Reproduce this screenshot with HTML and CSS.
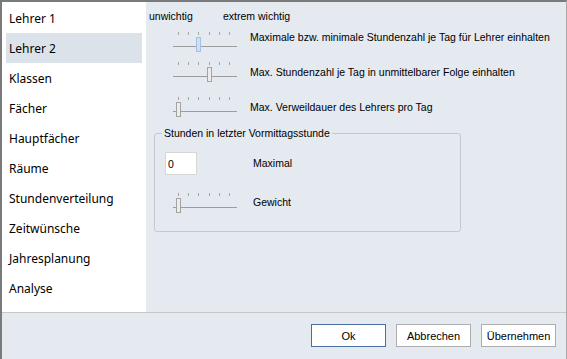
FILE: index.html
```html
<!DOCTYPE html>
<html lang="de">
<head>
<meta charset="utf-8">
<title>Einstellungen</title>
<link rel="stylesheet" href="styles.css">
</head>
<body>
<div class="window">
  <div class="main">
    <ul class="nav">
      <li>Lehrer 1</li>
      <li class="active">Lehrer 2</li>
      <li>Klassen</li>
      <li>Fächer</li>
      <li>Hauptfächer</li>
      <li>Räume</li>
      <li>Stundenverteilung</li>
      <li>Zeitwünsche</li>
      <li>Jahresplanung</li>
      <li>Analyse</li>
    </ul>
    <div class="content">
      <div class="scale"><span class="lo">unwichtig</span><span>extrem wichtig</span></div>
      <div class="row row1">
        <div class="slider"><div class="ticks"><i></i><i></i><i></i><i></i><i></i><i></i></div><div class="track"></div><div class="thumb focus" style="left:23px"></div></div>
        <span class="label">Maximale bzw. minimale Stundenzahl je Tag für Lehrer einhalten</span>
      </div>
      <div class="row row2">
        <div class="slider"><div class="ticks"><i></i><i></i><i></i><i></i><i></i><i></i></div><div class="track"></div><div class="thumb" style="left:34px"></div></div>
        <span class="label">Max. Stundenzahl je Tag in unmittelbarer Folge einhalten</span>
      </div>
      <div class="row row3">
        <div class="slider"><div class="ticks"><i></i><i></i><i></i><i></i><i></i><i></i></div><div class="track"></div><div class="thumb" style="left:3px"></div></div>
        <span class="label">Max. Verweildauer des Lehrers pro Tag</span>
      </div>
      <fieldset class="group">
        <legend>Stunden in letzter Vormittagsstunde</legend>
        <div class="field">
          <input class="num" type="text" value="0">
          <span class="flabel">Maximal</span>
        </div>
        <div class="grow">
          <div class="slider"><div class="ticks"><i></i><i></i><i></i><i></i><i></i><i></i></div><div class="track"></div><div class="thumb" style="left:3px"></div></div>
          <span class="glabel">Gewicht</span>
        </div>
      </fieldset>
    </div>
  </div>
  <div class="footer">
    <button class="btn default">Ok</button>
    <button class="btn">Abbrechen</button>
    <button class="btn">Übernehmen</button>
  </div>
</div>
</body>
</html>
```
FILE: styles.css
```css
* { box-sizing: border-box; }
html, body { margin: 0; padding: 0; background: #e5e9f0; }
body {
  font-family: "Liberation Sans", Arial, sans-serif;
  font-size: 10.5px;
  line-height: 13px;
  color: #000;
}
.window {
  width: 567px;
  height: 359px;
  border-top: 2px solid #7a7a7a;
  border-left: 2px solid #7a7a7a;
  border-right: 1px solid #a9a9a9;
  background: #e5e9f0;
  display: flex;
  flex-direction: column;
}
.main {
  height: 310px;
  display: flex;
}
.nav {
  list-style: none;
  margin: 0;
  padding: 1px 4px 0;
  width: 144px;
  background: #fff;
  font-family: "Noto Sans", "Open Sans", sans-serif;
  font-size: 12px;
}
.nav li {
  height: 30px;
  line-height: 31px;
  padding-left: 3px;
  color: #000;
}
.nav li.active { background: #dbe2ea; }
.content {
  flex: 1;
  padding-left: 3px;
}
.scale {
  display: flex;
  margin-top: 8px;
  height: 13px;
}
.scale .lo { width: 74px; }
.row {
  display: flex;
  align-items: flex-start;
}
.row .slider { margin-left: 24px; }
.row .label { margin-left: 13px; }
.row1 { margin-top: 8px; }
.row1 .slider { margin-top: 1px; }
.row2 { margin-top: 4px; }
.row2 .label { margin-top: 4px; }
.row3 { margin-top: 9px; }
.row3 .label { margin-top: 4px; }
.slider {
  position: relative;
  width: 64px;
  height: 26px;
  flex: none;
}
.ticks {
  display: flex;
  justify-content: space-between;
  padding: 0 7px 0 5px;
  height: 3px;
}
.ticks i {
  display: block;
  width: 1px;
  height: 3px;
  background: #a6a6a6;
}
.track {
  margin-top: 11px;
  height: 1px;
  background: #9c9c9c;
}
.thumb {
  position: absolute;
  top: 5px;
  width: 5px;
  height: 15px;
  border: 1px solid #a3a3a3;
  background: #ececec;
}
.thumb.focus {
  border-color: #a6bfe2;
  background: #cfe0f4;
}
.group {
  margin: 4px 0 0 5px;
  width: 307px;
  padding: 0 0 12px 0;
  border: 1px solid #c5c9cf;
  border-radius: 3px;
}
.group legend {
  margin-left: 7px;
  padding: 0 2px;
  height: 13px;
}
.field {
  display: flex;
  align-items: center;
  margin-top: 12px;
  margin-left: 10px;
}
.num {
  width: 32px;
  height: 23px;
  border: 1px solid #d6d6d6;
  background: #fff;
  font-family: "Liberation Sans", Arial, sans-serif;
  font-size: 10.5px;
  padding: 0 0 0 2px;
  margin: 0;
  outline: none;
}
.flabel { margin-left: 56px; }
.grow {
  display: flex;
  align-items: flex-start;
  margin-top: 18px;
  margin-left: 18px;
}
.glabel { margin-left: 16px; margin-top: 3px; }
.footer {
  flex: 1;
  border-top: 1px solid #c8c8c8;
  display: flex;
  justify-content: flex-end;
  align-items: flex-start;
  padding: 11px 10px 0 0;
  gap: 10px;
}
.btn {
  height: 23px;
  width: 75px;
  border: 1px solid #adadad;
  background: #fff;
  font-family: "Liberation Sans", Arial, sans-serif;
  font-size: 11px;
  color: #000;
  padding: 0;
  margin: 0;
}
.btn.default { border-color: #4a6f9e; }
```
